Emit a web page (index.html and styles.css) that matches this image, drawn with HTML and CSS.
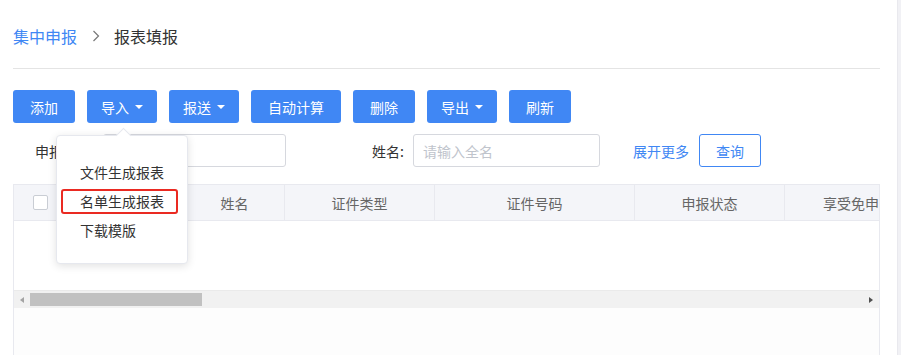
FILE: index.html
```html
<!DOCTYPE html>
<html lang="zh-CN">
<head>
  <meta charset="UTF-8" />
  <meta name="viewport" content="width=device-width, initial-scale=1" />
  <title>报表填报 | 集中申报</title>
  <link rel="stylesheet" href="styles.css">
</head>
<body>
  <div class="page">
    <main class="main">

      <nav class="crumb">
        <a href="#" class="crumb-link">集中申报</a>
        <svg class="crumb-sep" width="8" height="12" viewBox="0 0 8 12"><polyline points="1.5,1 6.5,6 1.5,11" fill="none" stroke="#777" stroke-width="1.2"/></svg>
        <span class="crumb-current">报表填报</span>
      </nav>

      <div class="toolbar">
        <button class="btn">添加</button>
        <div class="btn-wrap">
          <button class="btn btn-drop">导入<i class="caret"></i></button>
          <!-- open dropdown of the import button -->
          <ul class="dropdown">
            <li>文件生成报表</li>
            <li class="marked">名单生成报表</li>
            <li>下载模版</li>
          </ul>
        </div>
        <button class="btn btn-drop">报送<i class="caret"></i></button>
        <button class="btn">自动计算</button>
        <button class="btn">删除</button>
        <button class="btn btn-drop">导出<i class="caret"></i></button>
        <button class="btn">刷新</button>
      </div>

      <div class="filters">
        <label class="filter-label first">申报状态:</label>
        <input class="filter-input wide" type="text" placeholder="请选择">
        <label class="filter-label name">姓名:</label>
        <input class="filter-input" type="text" placeholder="请输入全名">
        <a href="#" class="more">展开更多</a>
        <button class="btn-outline">查询</button>
      </div>

      <div class="table">
        <div class="thead">
          <div class="th col-check"><span class="checkbox"></span></div>
          <div class="th col-no">序号</div>
          <div class="th col-name">姓名</div>
          <div class="th col-type">证件类型</div>
          <div class="th col-id">证件号码</div>
          <div class="th col-status">申报状态</div>
          <div class="th col-free">享受免申报</div>
        </div>
        <div class="tbody"></div>
        <div class="hscroll">
          <span class="arrow-left"></span>
          <div class="track"><div class="thumb"></div></div>
          <span class="arrow-right"></span>
        </div>
        <div class="tfoot"></div>
      </div>

    </main>
    <div class="edge"></div>
  </div>
</body>
</html>
```

FILE: styles.css
```css
:root {
  --primary: #4087f4;
  --text: #333;
  --muted: #666;
  --line: #e4e4e4;
  --cell-line: #e8e9ef;
  --head-bg: #f4f5f9;
  --font-stack: "Noto Sans CJK SC", "Noto Sans", sans-serif;
}

* {
  margin: 0;
  padding: 0;
  box-sizing: border-box;
}

body {
  font-family: var(--font-stack);
  font-size: 14px;
  color: var(--text);
  background: #fff;
}

.page {
  display: flex;
  height: 355px;
  overflow: hidden;
}

.main {
  width: 897px;
  padding: 0 17px 0 13px;
}

.edge {
  width: 4px;
  background: #f1f1f5;
  border-left: 1px solid #e9e9ee;
}

/* breadcrumb */
.crumb {
  display: flex;
  align-items: center;
  padding: 24px 0 20px;
  line-height: 24px;
  font-size: 16px;
  border-bottom: 1px solid var(--line);
}

.crumb-link {
  color: var(--primary);
  text-decoration: none;
}

.crumb-sep {
  margin: 0 14px 0 15px;
}

.crumb-current {
  color: #333;
}

/* toolbar */
.toolbar {
  display: flex;
  gap: 12px;
  margin-top: 21px;
}

.btn {
  height: 33px;
  padding: 0 17px;
  border: none;
  border-radius: 3px;
  background: var(--primary);
  color: #fff;
  font-family: var(--font-stack);
  font-size: 14px;
  display: flex;
  align-items: center;
  cursor: pointer;
}

.btn-drop {
  padding: 0 14px;
}

.caret {
  width: 0;
  height: 0;
  margin-left: 6px;
  border-left: 4px solid transparent;
  border-right: 4px solid transparent;
  border-top: 4px solid #fff;
}

.btn-wrap {
  position: relative;
}

.dropdown {
  position: absolute;
  top: 45px;
  left: -31px;
  width: 132px;
  padding: 22px 0 18px;
  list-style: none;
  background: #fff;
  border: 1px solid #e6e8ee;
  border-radius: 4px;
  box-shadow: 0 2px 8px rgba(0, 0, 0, 0.12);
  z-index: 10;
}

.dropdown::before {
  content: "";
  position: absolute;
  top: -6px;
  left: 61px;
  width: 10px;
  height: 10px;
  background: #fff;
  border-top: 1px solid #e6e8ee;
  border-left: 1px solid #e6e8ee;
  transform: rotate(45deg);
}

.dropdown li {
  position: relative;
  padding-left: 23px;
  line-height: 29px;
  color: #333;
  white-space: nowrap;
}

.dropdown li.marked::after {
  content: "";
  position: absolute;
  left: 4px;
  right: 9px;
  top: 2px;
  bottom: 2px;
  border: 2px solid #ea2a22;
  border-radius: 3px;
}

/* filters */
.filters {
  display: flex;
  align-items: center;
  margin-top: 11px;
  padding-left: 22px;
}

.filter-label {
  color: #333;
  white-space: nowrap;
}

.filter-label.first {
  width: 68px;
}

.filter-label.name {
  margin-left: 86px;
  margin-right: 9px;
}

.filter-input {
  width: 187px;
  height: 33px;
  padding: 0 9px;
  border: 1px solid #d6d8de;
  border-radius: 3px;
  font-family: var(--font-stack);
  font-size: 14px;
  color: #333;
  outline: none;
}

.filter-input.wide {
  width: 183px;
}

.filter-input::placeholder {
  color: #c0c4cc;
}

.more {
  margin-left: 33px;
  color: var(--primary);
  text-decoration: none;
}

.btn-outline {
  margin-left: 10px;
  width: 62px;
  height: 33px;
  border: 1px solid var(--primary);
  border-radius: 3px;
  background: #fff;
  color: var(--primary);
  font-family: var(--font-stack);
  font-size: 14px;
}

/* table */
.table {
  margin-top: 17px;
  border-left: 1px solid var(--cell-line);
  border-right: 1px solid var(--cell-line);
  overflow: hidden;
}

.thead {
  display: flex;
  height: 37px;
  background: var(--head-bg);
  border-top: 1px solid var(--cell-line);
  border-bottom: 1px solid var(--cell-line);
}

.th {
  flex: none;
  display: flex;
  align-items: center;
  justify-content: center;
  color: var(--muted);
  border-right: 1px solid var(--cell-line);
  white-space: nowrap;
}

.col-check { width: 55px; }
.col-no { width: 116px; }
.col-name { width: 100px; }
.col-type { width: 150px; }
.col-id { width: 200px; }
.col-status { width: 150px; }
.col-free { width: 150px; justify-content: flex-start; padding-left: 38px; }

.checkbox {
  width: 15px;
  height: 15px;
  margin-right: 2px;
  background: #fff;
  border: 1px solid #c9cdd4;
  border-radius: 2px;
}

.tbody {
  height: 69px;
  background: #fff;
}

.hscroll {
  display: flex;
  align-items: center;
  height: 18px;
  background: #f1f1f1;
  border-top: 1px solid #eaeaea;
}

.arrow-left {
  width: 0;
  height: 0;
  margin: 0 6px 0 6px;
  border-top: 3.5px solid transparent;
  border-bottom: 3.5px solid transparent;
  border-right: 4px solid #a3a3a3;
}

.track {
  flex: 1;
  height: 13px;
}

.thumb {
  width: 172px;
  height: 13px;
  background: #c1c1c1;
}

.arrow-right {
  width: 0;
  height: 0;
  margin: 0 6px;
  border-top: 3.5px solid transparent;
  border-bottom: 3.5px solid transparent;
  border-left: 4px solid #505050;
}

.tfoot {
  height: 60px;
  background: #fdfdfd;
}
```
